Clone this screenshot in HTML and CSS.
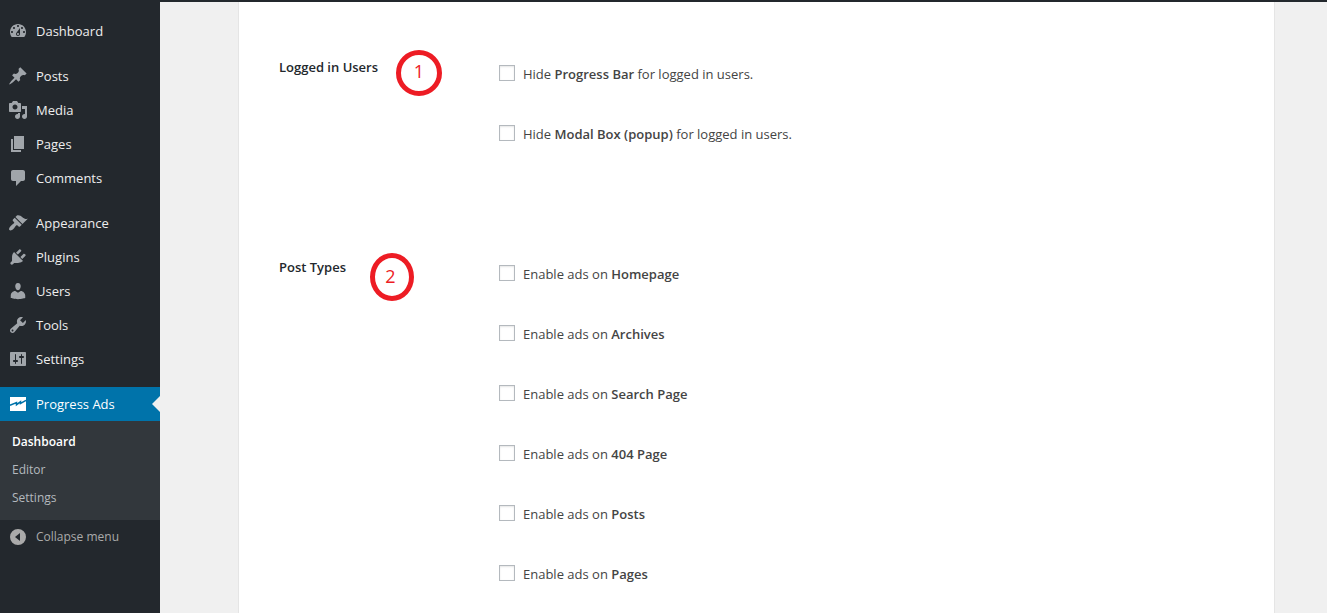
FILE: index.html
```html
<!DOCTYPE html>
<html lang="en">
<head>
<meta charset="utf-8">
<title>Progress Ads</title>
<link rel="stylesheet" href="styles.css">
</head>
<body>
<div class="adminbar"></div>
<div class="layout">
  <nav class="sidebar" aria-label="Main menu">
    <ul class="menu">
      <li><a class="item" href="#"><svg class="icon" viewBox="0 0 20 20"><path d="M3.76 16h12.48c1.1-1.37 1.76-3.11 1.76-5 0-4.42-3.58-8-8-8s-8 3.58-8 8c0 1.89.66 3.63 1.76 5zM10 4c.55 0 1 .45 1 1s-.45 1-1 1-1-.45-1-1 .45-1 1-1zM6 6c.55 0 1 .45 1 1s-.45 1-1 1-1-.45-1-1 .45-1 1-1zm8 0c.55 0 1 .45 1 1s-.45 1-1 1-1-.45-1-1 .45-1 1-1zm-5.37 5.55L12 7v6c0 1.1-.9 2-2 2s-2-.9-2-2c0-.57.24-1.08.63-1.45zM4 10c.55 0 1 .45 1 1s-.45 1-1 1-1-.45-1-1 .45-1 1-1zm12 0c.55 0 1 .45 1 1s-.45 1-1 1-1-.45-1-1 .45-1 1-1zm-5 3c0-.55-.45-1-1-1s-1 .45-1 1 .45 1 1 1 1-.45 1-1z" fill-rule="evenodd"/></svg>Dashboard</a></li>
      <li class="group"><a class="item" href="#"><svg class="icon" viewBox="0 0 20 20"><path d="M10.44 3.02l1.82-1.82 6.36 6.35-1.83 1.82c-1.05-.68-2.48-.57-3.41.36l-.75.75c-.92.93-1.04 2.35-.35 3.41l-1.83 1.82-2.41-2.41-2.8 2.79c-.42.42-3.38 2.71-3.8 2.29s1.86-3.39 2.28-3.81l2.79-2.79L4.1 9.36l1.83-1.82c1.05.69 2.48.57 3.4-.36l.75-.75c.93-.92 1.05-2.35.36-3.41z"/></svg>Posts</a></li>
      <li><a class="item" href="#"><svg class="icon" viewBox="0 0 20 20"><path d="M13 11V4c0-.55-.45-1-1-1h-1.67L9 1H5L3.67 3H2c-.55 0-1 .45-1 1v7c0 .55.45 1 1 1h10c.55 0 1-.45 1-1zM7 4.5c1.38 0 2.5 1.12 2.5 2.5S8.38 9.5 7 9.5 4.5 8.38 4.5 7 5.62 4.5 7 4.5zM14 6h5v10.5c0 1.38-1.12 2.5-2.5 2.5S14 17.88 14 16.5s1.12-2.5 2.5-2.5c.17 0 .34.02.5.05V9h-3V6zm-4 8.05V13h2v3.5c0 1.38-1.12 2.5-2.5 2.5S7 17.88 7 16.5 8.12 14 9.5 14c.17 0 .34.02.5.05z" fill-rule="evenodd"/></svg>Media</a></li>
      <li><a class="item" href="#"><svg class="icon" viewBox="0 0 20 20"><path d="M6 15V2h10v13H6zm-1 1h8v2H3V5h2v11z"/></svg>Pages</a></li>
      <li><a class="item" href="#"><svg class="icon" viewBox="0 0 20 20"><path d="M5 2h10c1.1 0 2 .9 2 2v7c0 1.1-.9 2-2 2h-2l-5 5v-5H5c-1.1 0-2-.9-2-2V4c0-1.1.9-2 2-2z"/></svg>Comments</a></li>
      <li class="group"><a class="item" href="#"><svg class="icon" viewBox="0 0 20 20"><path d="M14.48 11.06L7.41 3.99l1.5-1.5c.5-.56 2.3-.47 3.51.32 1.21.8 1.43 1.28 2.91 2.1 1.18.64 2.45 1.26 4.45.85zm-.71.71L6.7 4.7 4.93 6.47c-.39.39-.39 1.02 0 1.41l1.06 1.06c.39.39.39 1.03 0 1.42-.6.6-1.43 1.11-2.21 1.69-.35.26-.7.53-1.01.84C1.43 14.23.4 16.08 1.4 17.07c.99 1 2.84-.03 4.18-1.36.31-.31.58-.66.85-1.02.57-.78 1.08-1.61 1.69-2.21.39-.39 1.02-.39 1.41 0l1.06 1.06c.39.39 1.02.39 1.41 0z"/></svg>Appearance</a></li>
      <li><a class="item" href="#"><svg class="icon" viewBox="0 0 20 20"><path d="M13.11 4.36L9.87 7.6 8 5.73l3.24-3.24c.35-.34 1.05-.2 1.56.32.52.51.66 1.21.31 1.55zm-8 1.77l.91-1.12 9.01 9.01-1.19.84c-.71.71-2.63 1.16-3.82 1.16H6.14L4.9 17.26c-.59.59-1.54.59-2.12 0-.59-.58-.59-1.53 0-2.12l1.24-1.24v-3.88c0-1.13.4-3.19 1.09-3.89zm7.26 3.97l3.24-3.24c.34-.35 1.04-.21 1.55.31.52.51.66 1.21.31 1.55l-3.24 3.25z"/></svg>Plugins</a></li>
      <li><a class="item" href="#"><svg class="icon" viewBox="0 0 20 20"><path d="M10 9.25c-2.27 0-2.73-3.44-2.73-3.44C7 4.02 7.82 2 9.97 2c2.16 0 2.98 2.02 2.71 3.81 0 0-.41 3.44-2.68 3.44zm0 2.57L12.72 10c2.39 0 4.52 2.33 4.52 4.53v2.49s-3.65 1.13-7.24 1.13c-3.65 0-7.24-1.13-7.24-1.13v-2.49c0-2.25 1.94-4.48 4.47-4.48z"/></svg>Users</a></li>
      <li><a class="item" href="#"><svg class="icon" viewBox="0 0 20 20"><path d="M16.68 9.77c-1.34 1.34-3.3 1.67-4.95.99l-5.41 6.52c-.99.99-2.59.99-3.58 0s-.99-2.59 0-3.57l6.52-5.42c-.68-1.65-.35-3.61.99-4.95 1.28-1.28 3.12-1.62 4.72-1.06l-2.89 2.89 2.82 2.82 2.86-2.87c.53 1.58.18 3.39-1.08 4.65zM3.81 16.21c.4.39 1.04.39 1.43 0 .4-.4.4-1.04 0-1.43-.39-.4-1.03-.4-1.43 0-.39.39-.39 1.03 0 1.43z" fill-rule="evenodd"/></svg>Tools</a></li>
      <li><a class="item" href="#"><svg class="icon" viewBox="0 0 20 20"><path d="M18 16V4c0-.55-.45-1-1-1H3c-.55 0-1 .45-1 1v12c0 .55.45 1 1 1h14c.55 0 1-.45 1-1zM8 11h1c.55 0 1 .45 1 1s-.45 1-1 1H8v1.5c0 .28-.22.5-.5.5s-.5-.22-.5-.5V13H6c-.55 0-1-.45-1-1s.45-1 1-1h1V5.5c0-.28.22-.5.5-.5s.5.22.5.5V11zm5-2h-1c-.55 0-1-.45-1-1s.45-1 1-1h1V5.5c0-.28.22-.5.5-.5s.5.22.5.5V7h1c.55 0 1 .45 1 1s-.45 1-1 1h-1v5.5c0 .28-.22.5-.5.5s-.5-.22-.5-.5V9z" fill-rule="evenodd"/></svg>Settings</a></li>
      <li class="group">
        <a class="item current" href="#"><svg class="icon" viewBox="0 0 20 20"><path d="M2 3h16v14H2z"/><path class="zigzag" d="M2 11.2L8.500 8.500V10.700L12.500 7.800V9.500L18 6.300"/></svg>Progress Ads</a>
        <ul class="submenu">
          <li><a class="subitem active" href="#">Dashboard</a></li>
          <li><a class="subitem" href="#">Editor</a></li>
          <li><a class="subitem" href="#">Settings</a></li>
        </ul>
      </li>
    </ul>
    <button class="item collapse" type="button"><svg class="icon" viewBox="0 0 20 20"><path d="M10 2a8 8 0 1 0 0 16 8 8 0 0 0 0-16zM12 6v8L7 10z" fill-rule="evenodd"/></svg>Collapse menu</button>
  </nav>
  <main class="content">
    <form class="panel">
      <section class="setting" aria-labelledby="logged-in">
        <h2 class="title" id="logged-in">Logged in Users</h2>
        <div class="options">
          <label class="option"><input class="check" type="checkbox"><span>Hide <strong>Progress Bar</strong> for logged in users.</span></label>
          <label class="option"><input class="check" type="checkbox"><span>Hide <strong>Modal Box (popup)</strong> for logged in users.</span></label>
        </div>
        <span class="marker marker-one">1</span>
      </section>
      <section class="setting" aria-labelledby="post-types">
        <h2 class="title" id="post-types">Post Types</h2>
        <div class="options">
          <label class="option"><input class="check" type="checkbox"><span>Enable ads on <strong>Homepage</strong></span></label>
          <label class="option"><input class="check" type="checkbox"><span>Enable ads on <strong>Archives</strong></span></label>
          <label class="option"><input class="check" type="checkbox"><span>Enable ads on <strong>Search Page</strong></span></label>
          <label class="option"><input class="check" type="checkbox"><span>Enable ads on <strong>404 Page</strong></span></label>
          <label class="option"><input class="check" type="checkbox"><span>Enable ads on <strong>Posts</strong></span></label>
          <label class="option"><input class="check" type="checkbox"><span>Enable ads on <strong>Pages</strong></span></label>
        </div>
        <span class="marker marker-two">2</span>
      </section>
    </form>
  </main>
</div>
</body>
</html>
```

FILE: styles.css
```css
* {
  box-sizing: border-box;
}

body {
  display: flex;
  flex-direction: column;
  min-height: 100vh;
  margin: 0;
  background: #f0f0f0;
  color: #444;
  font: 13px/20px "Open Sans", "Noto Sans", sans-serif;
}

.adminbar {
  height: 2px;
  background: #23282d;
}

.layout {
  display: flex;
  flex: 1;
}

/* Sidebar */
.sidebar {
  flex: none;
  width: 160px;
  padding-top: 12px;
  background: #23282d;
}

.menu,
.submenu {
  margin: 0;
  padding: 0;
  list-style: none;
}

.group {
  margin-top: 11px;
}

.item {
  position: relative;
  display: flex;
  align-items: center;
  gap: 8px;
  width: 100%;
  height: 34px;
  padding: 0 8px;
  color: #eee;
  text-decoration: none;
}

.icon {
  flex: none;
  width: 20px;
  height: 20px;
  fill: #a0a5aa;
}

.current {
  background: #0073aa;
  color: #fff;
}

.current .icon {
  fill: #fff;
}

.icon .zigzag {
  fill: none;
  stroke: #0073aa;
  stroke-width: 1.5;
}

.current::after {
  content: "";
  position: absolute;
  top: 9px;
  right: 0;
  border: 8px solid transparent;
  border-left-width: 0;
  border-right-color: #f0f0f0;
}

.submenu {
  padding: 7px 0 8px;
  background: #32373c;
}

.subitem {
  display: block;
  padding: 4px 12px;
  color: #b4b9be;
  font-size: 12px;
  text-decoration: none;
}

.active {
  color: #fff;
  font-weight: 600;
}

.collapse {
  border: 0;
  background: none;
  color: #aaa;
  font: inherit;
  font-size: 12px;
}

.collapse .icon {
  fill: #aaa;
}

/* Settings panel */
.content {
  display: flex;
  flex: 1;
  padding: 0 52px 0 78px;
}

.panel {
  display: flex;
  flex: 1;
  flex-direction: column;
  gap: 80px;
  padding: 42px 40px 0;
  border: solid #e5e5e5;
  border-width: 0 1px;
  background: #fff;
}

.setting {
  position: relative;
  display: grid;
  grid-template-columns: 200px 1fr;
  column-gap: 20px;
}

.title {
  margin: 0;
  padding-top: 13px;
  color: #23282d;
  font-size: 13px;
  font-weight: 600;
  line-height: 20px;
}

.options {
  display: grid;
  justify-items: start;
}

.option {
  display: flex;
  align-items: center;
  gap: 8px;
  height: 60px;
}

.option strong {
  font-weight: 600;
}

.check {
  width: 16px;
  height: 16px;
  margin: 0 0 2px;
  border: 1px solid #b4b9be;
  background: #fff;
  box-shadow: inset 0 1px 2px rgba(0, 0, 0, 0.1);
  appearance: none;
}

.check:checked {
  background: #0073aa;
}

/* Numbered callouts drawn over the form */
.marker {
  position: absolute;
  display: flex;
  justify-content: center;
  width: 46px;
  height: 46px;
  padding-top: 6px;
  border: 5px solid #ed1c24;
  border-radius: 50%;
  color: #ed1c24;
  font-size: 18px;
}

.marker-one {
  top: 6px;
  left: 117px;
}

.marker-two {
  top: 9px;
  left: 91px;
  width: 44px;
  height: 48px;
  padding: 8px 3px 0 0;
}
```
